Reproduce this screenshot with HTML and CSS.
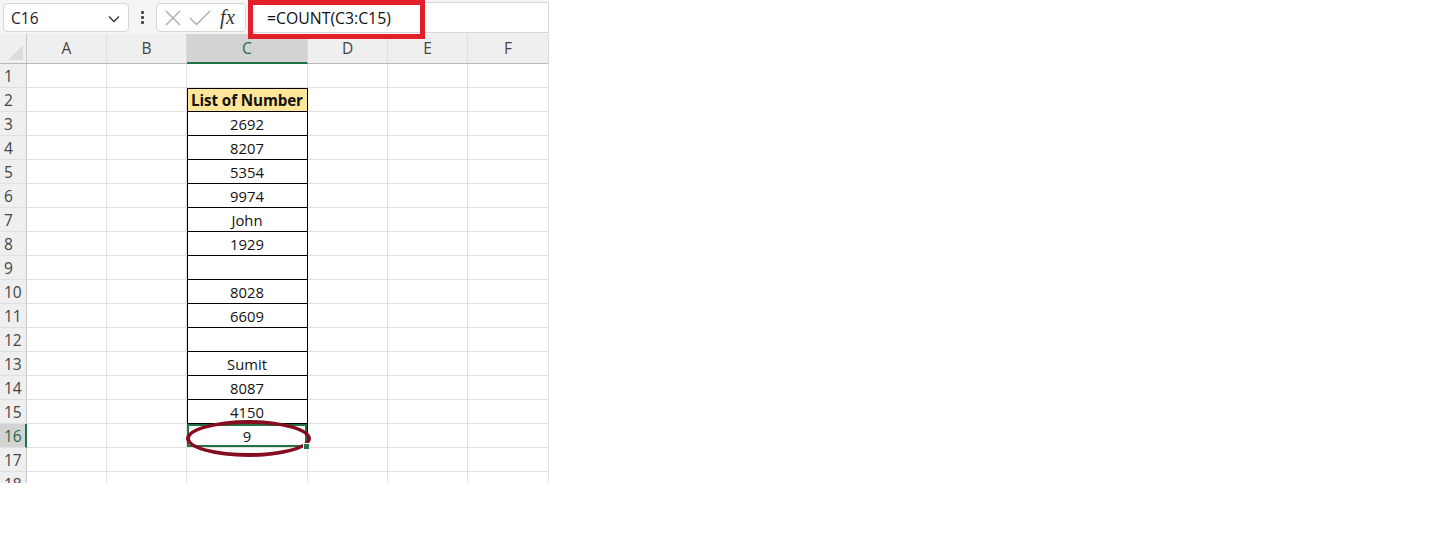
FILE: index.html
```html
<!DOCTYPE html>
<html>
<head>
<meta charset="utf-8">
<link rel="stylesheet" href="styles.css">
</head>
<body>
<div class="sheet">
  <div class="topbar">
    <div class="namebox"><span>C16</span>
      <svg class="chev" width="12" height="8" viewBox="0 0 12 8"><path d="M1 1.5 L6 6.5 L11 1.5" fill="none" stroke="#333" stroke-width="1.3"/></svg>
    </div>
    <div class="dots"><i></i><i></i><i></i></div>
    <div class="fxbox">
      <svg width="18" height="18" viewBox="0 0 18 18"><path d="M2 2 L16 16 M16 2 L2 16" stroke="#a8a8a8" stroke-width="1.3" fill="none"/></svg>
      <svg width="22" height="18" viewBox="0 0 22 18"><path d="M1 9 L7.5 15.5 L21 2" stroke="#a8a8a8" stroke-width="1.3" fill="none"/></svg>
      <span class="fx">fx</span>
    </div>
    <div class="formula"><span>=COUNT(C3:C15)</span></div>
    <div class="redbox"></div>
  </div>
  <div class="grid">
    <div class="row head">
      <div class="rh corner"></div>
      <div class="c ca">A</div><div class="c cb">B</div><div class="c cc sel">C</div><div class="c cd">D</div><div class="c ce">E</div><div class="c cf">F</div>
    </div>
    <div class="row"><div class="rh">1</div><div class="c ca"></div><div class="c cb"></div><div class="c cc"></div><div class="c cd"></div><div class="c ce"></div><div class="c cf"></div></div>
    <div class="row"><div class="rh">2</div><div class="c ca"></div><div class="c cb"></div><div class="c cc bd top title">List of Number</div><div class="c cd"></div><div class="c ce"></div><div class="c cf"></div></div>
    <div class="row"><div class="rh">3</div><div class="c ca"></div><div class="c cb"></div><div class="c cc bd">2692</div><div class="c cd"></div><div class="c ce"></div><div class="c cf"></div></div>
    <div class="row"><div class="rh">4</div><div class="c ca"></div><div class="c cb"></div><div class="c cc bd">8207</div><div class="c cd"></div><div class="c ce"></div><div class="c cf"></div></div>
    <div class="row"><div class="rh">5</div><div class="c ca"></div><div class="c cb"></div><div class="c cc bd">5354</div><div class="c cd"></div><div class="c ce"></div><div class="c cf"></div></div>
    <div class="row"><div class="rh">6</div><div class="c ca"></div><div class="c cb"></div><div class="c cc bd">9974</div><div class="c cd"></div><div class="c ce"></div><div class="c cf"></div></div>
    <div class="row"><div class="rh">7</div><div class="c ca"></div><div class="c cb"></div><div class="c cc bd">John</div><div class="c cd"></div><div class="c ce"></div><div class="c cf"></div></div>
    <div class="row"><div class="rh">8</div><div class="c ca"></div><div class="c cb"></div><div class="c cc bd">1929</div><div class="c cd"></div><div class="c ce"></div><div class="c cf"></div></div>
    <div class="row"><div class="rh">9</div><div class="c ca"></div><div class="c cb"></div><div class="c cc bd"></div><div class="c cd"></div><div class="c ce"></div><div class="c cf"></div></div>
    <div class="row"><div class="rh">10</div><div class="c ca"></div><div class="c cb"></div><div class="c cc bd">8028</div><div class="c cd"></div><div class="c ce"></div><div class="c cf"></div></div>
    <div class="row"><div class="rh">11</div><div class="c ca"></div><div class="c cb"></div><div class="c cc bd">6609</div><div class="c cd"></div><div class="c ce"></div><div class="c cf"></div></div>
    <div class="row"><div class="rh">12</div><div class="c ca"></div><div class="c cb"></div><div class="c cc bd"></div><div class="c cd"></div><div class="c ce"></div><div class="c cf"></div></div>
    <div class="row"><div class="rh">13</div><div class="c ca"></div><div class="c cb"></div><div class="c cc bd">Sumit</div><div class="c cd"></div><div class="c ce"></div><div class="c cf"></div></div>
    <div class="row"><div class="rh">14</div><div class="c ca"></div><div class="c cb"></div><div class="c cc bd">8087</div><div class="c cd"></div><div class="c ce"></div><div class="c cf"></div></div>
    <div class="row"><div class="rh">15</div><div class="c ca"></div><div class="c cb"></div><div class="c cc bd">4150</div><div class="c cd"></div><div class="c ce"></div><div class="c cf"></div></div>
    <div class="row"><div class="rh selr">16</div><div class="c ca"></div><div class="c cb"></div><div class="c cc active">9<span class="handle"></span><span class="ring"></span></div><div class="c cd"></div><div class="c ce"></div><div class="c cf"></div></div>
    <div class="row"><div class="rh">17</div><div class="c ca"></div><div class="c cb"></div><div class="c cc"></div><div class="c cd"></div><div class="c ce"></div><div class="c cf"></div></div>
    <div class="row"><div class="rh">18</div><div class="c ca"></div><div class="c cb"></div><div class="c cc"></div><div class="c cd"></div><div class="c ce"></div><div class="c cf"></div></div>
  </div>
</div>
</body>
</html>
```
FILE: styles.css
```css
html, body { margin: 0; padding: 0; background: #fff; }
.sheet {
  width: 549px;
  height: 483px;
  overflow: hidden;
  font-family: "Open Sans", "Noto Sans", sans-serif;
  background: #fff;
}
.topbar {
  position: relative;
  z-index: 5;
  height: 34px;
  background: #f5f5f5;
  display: flex;
  align-items: flex-start;
}
.namebox {
  margin: 3px 0 0 3px;
  width: 126px;
  height: 29px;
  box-sizing: border-box;
  background: #fff;
  border: 1px solid #d6d6d6;
  border-radius: 4px;
  display: flex;
  align-items: center;
  justify-content: space-between;
  padding: 0 8px 0 7px;
  font-size: 15.5px;
  color: #222;
}
.chev { margin-top: 2px; }
.dots {
  width: 27px;
  display: flex;
  flex-direction: column;
  align-items: center;
  gap: 2px;
  padding-top: 11px;
}
.dots i { display: block; width: 3px; height: 3px; background: #444; border-radius: 1px; }
.fxbox {
  margin-top: 3px;
  width: 90px;
  height: 29px;
  box-sizing: border-box;
  background: #fff;
  border: 1px solid #d6d6d6;
  border-radius: 4px;
  display: flex;
  align-items: center;
  padding-left: 7px;
  gap: 7px;
}
.fx {
  font-family: "Liberation Serif", "DejaVu Serif", serif;
  font-style: italic;
  font-size: 20px;
  color: #333;
  margin-left: 2px;
  letter-spacing: 0.5px;
}
.formula {
  margin: 2px 0 0 4px;
  flex: 1;
  height: 31px;
  box-sizing: border-box;
  background: #fff;
  border: 1px solid #d6d6d6;
  display: flex;
  align-items: center;
  padding-left: 16px;
  font-size: 15.8px;
  color: #111;
}
.redbox {
  position: absolute;
  left: 248px;
  top: 0;
  width: 177px;
  height: 39px;
  box-sizing: border-box;
  border: 5px solid #e3202a;
}
.grid { display: flex; flex-direction: column; }
.row { display: flex; height: 24px; }
.row.head { height: 30px; }
.rh {
  width: 27px;
  flex: none;
  box-sizing: border-box;
  background: #efefef;
  border-right: 1px solid #c8c8c8;
  border-bottom: 1px solid #e0e0e0;
  font-family: "Open Sans", "Noto Sans", sans-serif;
  font-size: 15.5px;
  color: #444;
  padding-left: 4px;
  padding-top: 1px;
  line-height: 23px;
}
.rh.selr {
  background: #d3d3d3;
  color: #1e6b41;
  border-right: 2px solid #217346;
}
.rh.corner {
  position: relative;
  padding: 0;
  background: #efefef;
  border-bottom: 1px solid #b8b8b8;
}
.rh.corner::after {
  content: "";
  position: absolute;
  right: 3px;
  bottom: 3px;
  width: 0; height: 0;
  border-left: 15px solid transparent;
  border-bottom: 15px solid #dcdcdc;
}
.c {
  flex: none;
  box-sizing: border-box;
  border-right: 1px solid #e1e1e1;
  border-bottom: 1px solid #e1e1e1;
  text-align: center;
  font-size: 14.8px;
  line-height: 23px;
  padding-top: 1px;
  color: #111;
  position: relative;
}
.ca, .cb, .cd, .ce { width: 80px; }
.cc { width: 121px; }
.cf { width: 81px; }
.head .c {
  background: #efefef;
  border-bottom: 1px solid #b8b8b8;
  border-right: 1px solid #dcdcdc;
  color: #444;
  font-size: 15.5px;
  line-height: 29px;
  padding-top: 0;
}
.head .c.sel {
  background: #d3d3d3;
  color: #1e6b41;
  border-bottom: 2px solid #217346;
  line-height: 28px;
}
.c.bd {
  border-right: 1px solid #000;
  border-bottom: 1px solid #000;
  box-shadow: inset 1px 0 0 #000;
}
.c.bd.top { box-shadow: inset 1px 1px 0 #000; }
.c.title {
  background: #ffe699;
  font-weight: bold;
  font-size: 15.2px;
  letter-spacing: -0.1px;
  white-space: nowrap;
}
.c.active {
  box-shadow: inset 0 0 0 2px #217346;
  border-right: 1px solid #000;
}
.handle {
  position: absolute;
  right: -3px;
  bottom: -3px;
  width: 5px;
  height: 5px;
  background: #217346;
  border: 1px solid #fff;
  z-index: 3;
}
.ring {
  position: absolute;
  left: -1px;
  top: -4px;
  width: 125px;
  height: 37px;
  box-sizing: border-box;
  border: 4px solid #850d1f;
  border-radius: 50%;
  z-index: 2;
}
```
